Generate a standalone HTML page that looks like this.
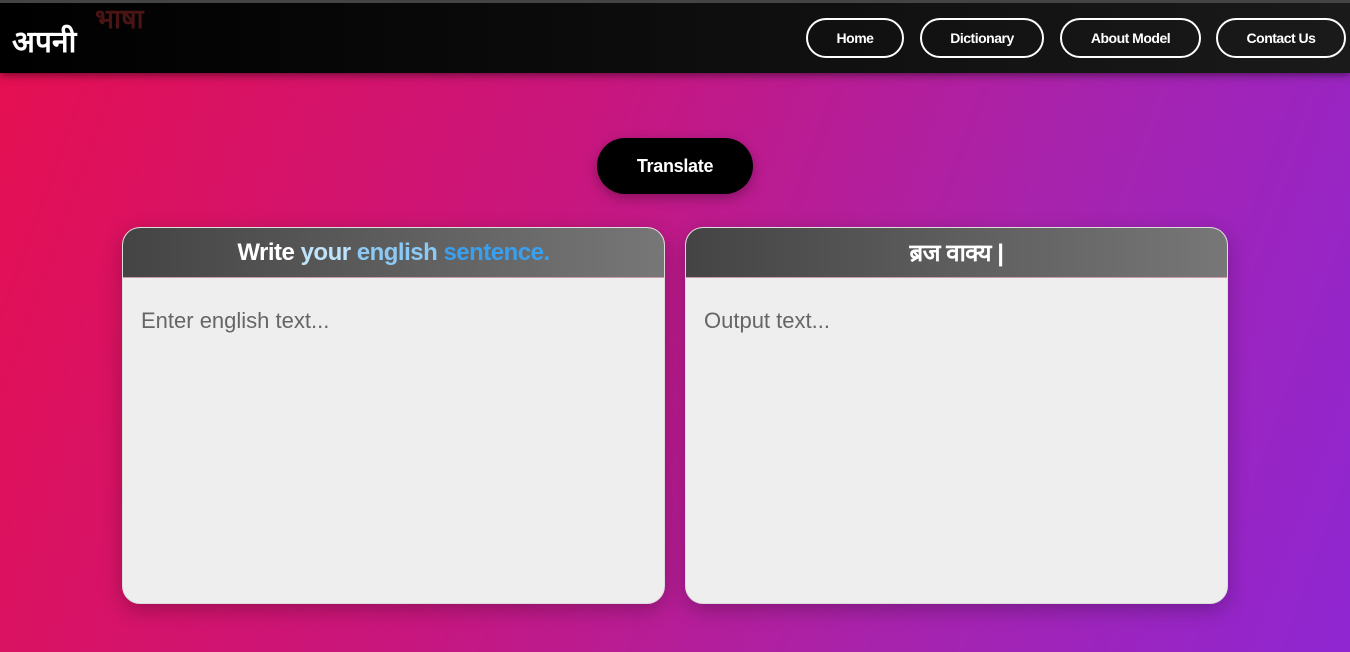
<!DOCTYPE html>
<html><head><meta charset="utf-8"><style>
*{margin:0;padding:0;box-sizing:border-box}
body{width:1350px;height:652px;overflow:hidden;font-family:"Liberation Sans","Noto Sans CJK SC",sans-serif;background:linear-gradient(110deg,#e60f50 0%,#c8167e 40%,#a823ac 70%,#8f26d2 100%);position:relative}
.nav{position:absolute;left:0;top:0;width:1350px;height:73px;background:linear-gradient(90deg,#000,#1a1a1a);border-top:3px solid #444;box-shadow:0 2px 8px rgba(0,0,0,.5)}
.logo{position:absolute;left:12px;top:17px;color:#fff;font-size:30px;font-weight:bold}
.logo2{position:absolute;left:95px;top:-4px;color:#4a1414;font-size:27px;font-weight:bold}
.btn{position:absolute;top:15px;height:40px;border:2px solid #fff;border-radius:20px;color:#fff;font-size:14px;font-weight:bold;display:flex;align-items:center;justify-content:center;letter-spacing:-.5px}
.tr{position:absolute;left:597px;top:138px;width:156px;height:56px;background:#000;border-radius:28px;color:#fff;font-weight:bold;font-size:18px;display:flex;align-items:center;justify-content:center;box-shadow:0 4px 12px rgba(0,0,0,.3);letter-spacing:-.3px}
.card{position:absolute;top:227px;width:543px;height:377px;background:#eee;border-radius:18px;overflow:hidden;box-shadow:0 6px 20px rgba(0,0,0,.25);border:1px solid #ddd}
.hd{height:50px;background:linear-gradient(90deg,#444,#777);display:flex;align-items:center;justify-content:center;font-size:24px;font-weight:bold;color:#fff;border-bottom:1px solid #c9a;letter-spacing:-.5px}
.ph{padding:30px 18px;font-size:22px;color:#666}
</style></head><body>
<div class="nav">
<div class="logo2">भाषा</div>
<div class="logo">अपनी</div>
<div class="btn" style="left:806px;width:98px">Home</div>
<div class="btn" style="left:920px;width:124px">Dictionary</div>
<div class="btn" style="left:1060px;width:141px">About Model</div>
<div class="btn" style="left:1216px;width:130px">Contact Us</div>
</div>
<div class="tr">Translate</div>
<div class="card" style="left:122px"><div class="hd"><span>Write&nbsp;</span><span style="color:#bfe3fb">your&nbsp;</span><span style="color:#8ccaf5">english&nbsp;</span><span style="color:#39a0f0">sentence.</span></div><div class="ph">Enter english text...</div></div>
<div class="card" style="left:685px"><div class="hd">ब्रज वाक्य |</div><div class="ph">Output text...</div></div>
</body></html>
